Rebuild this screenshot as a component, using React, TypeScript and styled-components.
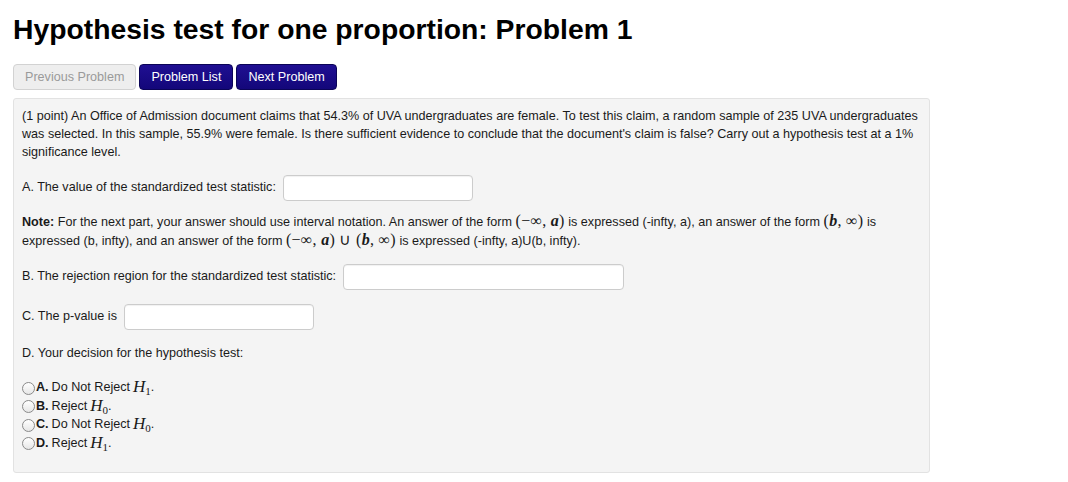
import React from "react";
import styled, { createGlobalStyle } from "styled-components";

const Global = createGlobalStyle`
  html, body { margin: 0; padding: 0; background: #ffffff; }
  body { font-family: "Liberation Sans", Arial, sans-serif; color: #1a1a1a; }
`;

const Page = styled.div`
  padding: 0 0 0 13px;
  width: 917px;
`;

const Title = styled.h1`
  margin: 0;
  padding-top: 13px;
  font-size: 28.3px;
  line-height: 32px;
  font-weight: bold;
  color: #000;
  font-family: "Liberation Sans", Arial, sans-serif;
`;

const Nav = styled.div`
  display: flex;
  gap: 3px;
  margin-top: 19px;
`;

const NavButton = styled.button<{ $primary?: boolean }>`
  height: 26px;
  padding: 0 11px;
  border-radius: 4px;
  font-family: "Liberation Sans", Arial, sans-serif;
  font-size: 12.6px;
  cursor: pointer;
  border: 1px solid ${(p) => (p.$primary ? "#0b0457" : "#d2d2d2")};
  color: ${(p) => (p.$primary ? "#ffffff" : "#9a9a9a")};
  background: ${(p) =>
    p.$primary ? "linear-gradient(#1f0f92, #13077a)" : "#eeeeee"};
`;

const Panel = styled.div`
  margin-top: 8px;
  background: #f4f4f4;
  border: 1px solid #e2e2e2;
  border-radius: 3px;
  padding: 8px;
  font-size: 12.6px;
  line-height: 18px;
  color: #1a1a1a;
  box-sizing: border-box;
  height: 375px;
`;

const Para = styled.p<{ $top?: number }>`
  margin: ${(p) => p.$top ?? 0}px 0 0 0;
`;

const Row = styled.div<{ $top: number }>`
  display: flex;
  align-items: center;
  gap: 7px;
  margin-top: ${(p) => p.$top}px;
  height: 26px;
`;

const Label = styled.span`
  position: relative;
  top: -1px;
`;

const Answer = styled.input<{ $w: number }>`
  width: ${(p) => p.$w}px;
  height: 26px;
  box-sizing: border-box;
  border: 1px solid #cccccc;
  border-radius: 4px;
  background: #ffffff;
  box-shadow: inset 0 1px 1px rgba(0, 0, 0, 0.06);
  padding: 0 6px;
  margin: 0;
`;

const Options = styled.div`
  margin-top: 16px;
  display: flex;
  flex-direction: column;
`;

const Option = styled.label`
  display: flex;
  align-items: center;
  height: 18.5px;
`;

const Radio = styled.input`
  appearance: none;
  width: 13px;
  height: 13px;
  margin: 2px 1px 0 0;
  border-radius: 50%;
  border: 1px solid #8a8a8a;
  background: linear-gradient(#ffffff, #e6e6e6);
  box-sizing: border-box;
  flex: none;
`;

const Letter = styled.b`
  font-weight: bold;
  margin-right: 3px;
`;

const MathVar = styled.span`
  font-family: "Liberation Serif", "Times New Roman", serif;
  font-style: italic;
  font-size: 17px;
  margin-left: 3px;
`;

const Sub = styled.sub`
  font-family: "Liberation Serif", "Times New Roman", serif;
  font-style: normal;
  font-size: 11px;
  vertical-align: -3px;
  line-height: 0;
`;

const Interval = styled.span`
  font-family: "Liberation Serif", "Times New Roman", serif;
  font-size: 16px;
  letter-spacing: 0.3px;
`;

const IVar = styled.i`
  font-weight: bold;
`;

const H = ({ n }: { n: string }) => (
  <MathVar>
    H<Sub>{n}</Sub>
  </MathVar>
);

export default function App() {
  return (
    <Page>
      <Global />
      <Title>Hypothesis test for one proportion: Problem 1</Title>
      <Nav>
        <NavButton>Previous Problem</NavButton>
        <NavButton $primary>Problem List</NavButton>
        <NavButton $primary>Next Problem</NavButton>
      </Nav>
      <Panel>
        <Para>
          (1 point) An Office of Admission document claims that 54.3% of UVA undergraduates are
          female. To test this claim, a random sample of 235 UVA undergraduates was selected. In
          this sample, 55.9% were female. Is there sufficient evidence to conclude that the
          document's claim is false? Carry out a hypothesis test at a 1% significance level.
        </Para>
        <Row $top={14}>
          <Label>A. The value of the standardized test statistic:</Label>
          <Answer $w={190} />
        </Row>
        <Para $top={11}>
          <b>Note:</b> For the next part, your answer should use interval notation. An answer of
          the form{" "}
          <Interval>
            (−∞, <IVar>a</IVar>)
          </Interval>{" "}
          is expressed (-infty, a), an answer of the form{" "}
          <Interval>
            (<IVar>b</IVar>, ∞)
          </Interval>{" "}
          is expressed (b, infty), and an answer of the form{" "}
          <Interval>
            (−∞, <IVar>a</IVar>) ∪ (<IVar>b</IVar>, ∞)
          </Interval>{" "}
          is expressed (-infty, a)U(b, infty).
        </Para>
        <Row $top={14}>
          <Label>B. The rejection region for the standardized test statistic:</Label>
          <Answer $w={281} />
        </Row>
        <Row $top={14}>
          <Label>C. The p-value is</Label>
          <Answer $w={190} />
        </Row>
        <Para $top={14}>D. Your decision for the hypothesis test:</Para>
        <Options>
          <Option>
            <Radio type="radio" name="d" />
            <Letter>A.</Letter> Do Not Reject <H n="1" />.
          </Option>
          <Option>
            <Radio type="radio" name="d" />
            <Letter>B.</Letter> Reject <H n="0" />.
          </Option>
          <Option>
            <Radio type="radio" name="d" />
            <Letter>C.</Letter> Do Not Reject <H n="0" />.
          </Option>
          <Option>
            <Radio type="radio" name="d" />
            <Letter>D.</Letter> Reject <H n="1" />.
          </Option>
        </Options>
      </Panel>
    </Page>
  );
}
